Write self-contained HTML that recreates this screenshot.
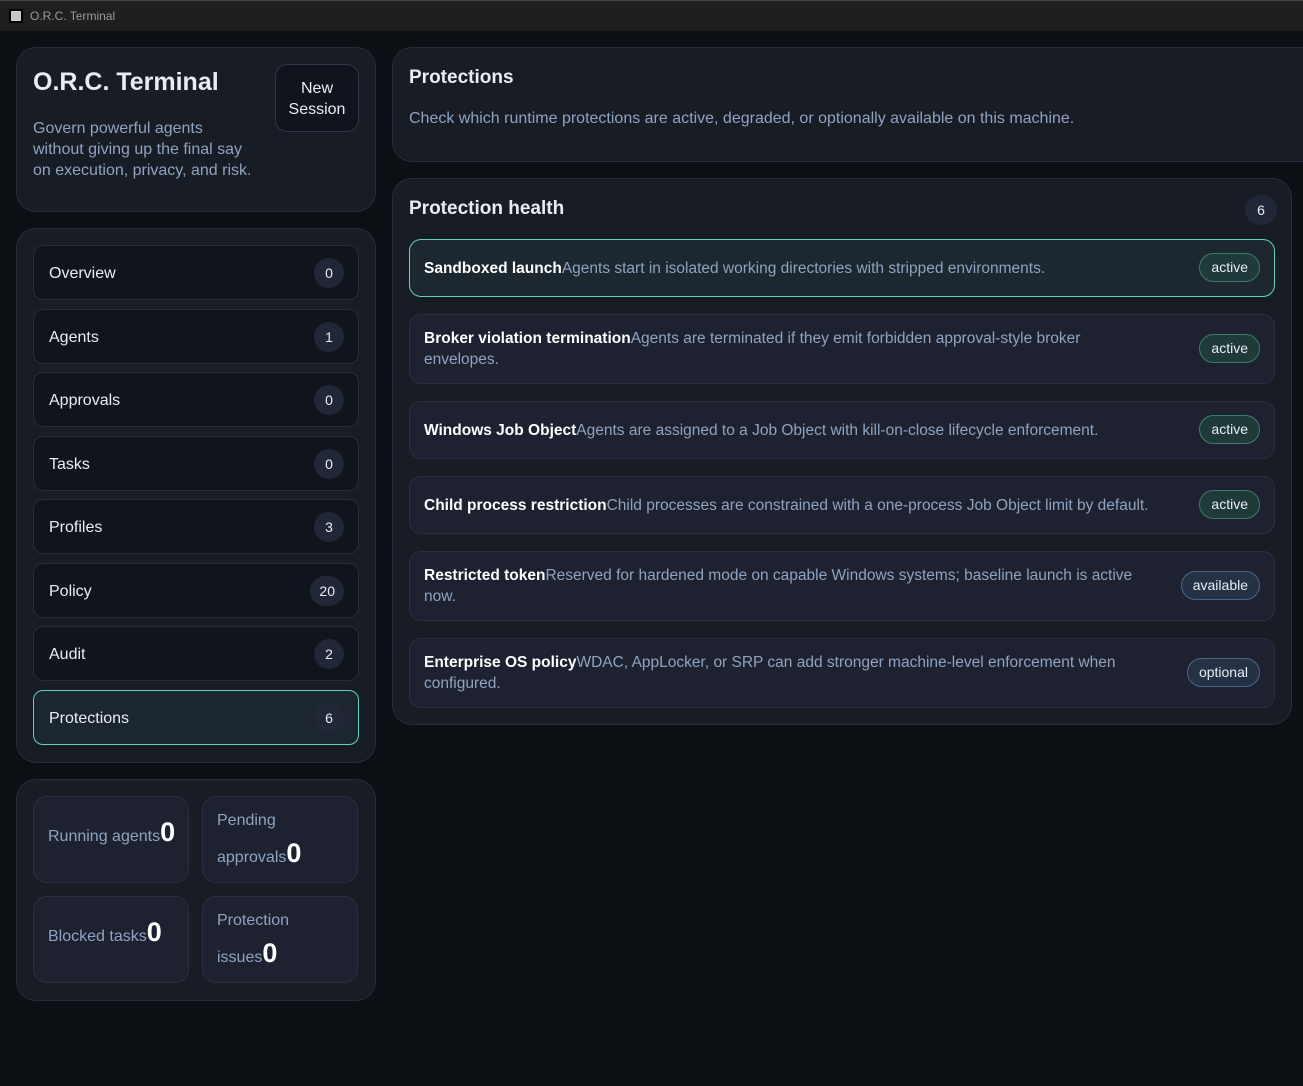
<!DOCTYPE html>
<html><head><style>
*{box-sizing:border-box;margin:0;padding:0}
body{width:1303px;height:1086px;background:#0c0f14;font-family:"Liberation Sans","DejaVu Sans",sans-serif;color:#e8edf5;position:relative;overflow:hidden}
.tb{position:absolute;left:0;top:0;width:1303px;height:31px;background:#1f1f1f;border-top:1px solid #444;font-size:12px;color:#9a9a9a}
.tb .ic{position:absolute;left:9px;top:8px;width:14px;height:14px;background:#c8c8c8;border:2px solid #000}
.tb span{position:absolute;left:30px;top:8px}
.p{position:absolute;background:#181c25;border:1px solid #272d3a;border-radius:20px}
.nav{position:absolute;left:16px;width:326px;height:55px;background:#10141c;border:1px solid #272d3a;border-radius:10px;font-size:16px;padding:0 0 0 15px;line-height:56px}
.nav.on{background:#1c2630;border-color:#5fd4b4}
.b{position:absolute;right:14px;top:12px;height:30px;min-width:30px;padding:0 9px;border-radius:15px;background:#212736;font-size:14px;line-height:30px;text-align:center}
.st{position:absolute;width:156px;height:87px;background:#1e2230;border:1px solid #2a3040;border-radius:14px;color:#8fa3c0;font-size:16px;padding-left:14px}
.st b{color:#fff;font-size:27px}
.it{position:absolute;left:16px;width:866px;background:#1e2230;border:1px solid #2a3040;border-radius:12px;font-size:15.5px;color:#8fa3c0;padding:0 120px 0 14px;display:flex;align-items:center;line-height:21px}
.it b{color:#fff}
.it.on{background:#1c272f;border-color:#5fd4b4}
.pl{position:absolute;right:14px;top:50%;margin-top:-15px;height:29px;border-radius:15px;padding:0 11px;font-size:14px;line-height:27px;color:#e8edf5;background:#1f3a38;border:1px solid #3d7a6c}
.pl.g{background:#253246;border-color:#4b6585}
</style></head><body>
<div class="tb"><div class="ic"></div><span>O.R.C. Terminal</span></div>

<div class="p" style="left:16px;top:47px;width:360px;height:165px">
<div style="position:absolute;left:16px;top:20px;font-size:25px;font-weight:bold">O.R.C. Terminal</div>
<div style="position:absolute;left:16px;top:70px;width:222px;font-size:16px;line-height:21px;color:#8fa3c0">Govern powerful agents without giving up the final say on execution, privacy, and risk.</div>
<div style="position:absolute;left:258px;top:16px;width:84px;height:68px;border:1px solid #2e3546;border-radius:12px;background:#10141c;text-align:center;font-size:16px;line-height:21px;padding-top:13px">New<br>Session</div>
</div>

<div class="p" style="left:16px;top:228px;width:360px;height:535px">
<div class="nav" style="top:16px">Overview<span class="b">0</span></div>
<div class="nav" style="top:80px">Agents<span class="b">1</span></div>
<div class="nav" style="top:143px">Approvals<span class="b">0</span></div>
<div class="nav" style="top:207px">Tasks<span class="b">0</span></div>
<div class="nav" style="top:270px">Profiles<span class="b">3</span></div>
<div class="nav" style="top:334px">Policy<span class="b">20</span></div>
<div class="nav" style="top:397px">Audit<span class="b">2</span></div>
<div class="nav on" style="top:461px">Protections<span class="b">6</span></div>
</div>

<div class="p" style="left:16px;top:779px;width:360px;height:222px">
<div class="st" style="left:16px;top:16px;padding-top:20px">Running agents<b>0</b></div>
<div class="st" style="left:185px;top:16px;padding-top:8px;line-height:32px">Pending<br>approvals<b>0</b></div>
<div class="st" style="left:16px;top:116px;padding-top:20px">Blocked tasks<b>0</b></div>
<div class="st" style="left:185px;top:116px;padding-top:8px;line-height:32px">Protection<br>issues<b>0</b></div>
</div>

<div class="p" style="left:392px;top:47px;width:930px;height:115px">
<div style="position:absolute;left:16px;top:19px;font-size:19px;font-weight:bold">Protections</div>
<div style="position:absolute;left:16px;top:62px;font-size:16px;color:#8fa3c0">Check which runtime protections are active, degraded, or optionally available on this machine.</div>
</div>

<div class="p" style="left:392px;top:178px;width:900px;height:547px">
<div style="position:absolute;left:16px;top:19px;font-size:19px;font-weight:bold">Protection health</div>
<div class="b" style="top:16px;right:14px;width:32px;height:30px">6</div>
<div class="it on" style="top:60px;height:58px"><span><b>Sandboxed launch</b>Agents start in isolated working directories with stripped environments.</span><span class="pl">active</span></div>
<div class="it" style="top:135px;height:70px"><span><b>Broker violation termination</b>Agents are terminated if they emit forbidden approval-style broker envelopes.</span><span class="pl">active</span></div>
<div class="it" style="top:222px;height:58px"><span><b>Windows Job Object</b>Agents are assigned to a Job Object with kill-on-close lifecycle enforcement.</span><span class="pl">active</span></div>
<div class="it" style="top:297px;height:58px"><span style="white-space:nowrap"><b>Child process restriction</b>Child processes are constrained with a one-process Job Object limit by default.</span><span class="pl">active</span></div>
<div class="it" style="top:372px;height:70px"><span><b>Restricted token</b>Reserved for hardened mode on capable Windows systems; baseline launch is active now.</span><span class="pl g">available</span></div>
<div class="it" style="top:459px;height:70px"><span><b>Enterprise OS policy</b>WDAC, AppLocker, or SRP can add stronger machine-level enforcement when configured.</span><span class="pl g">optional</span></div>
</div>
</body></html>
